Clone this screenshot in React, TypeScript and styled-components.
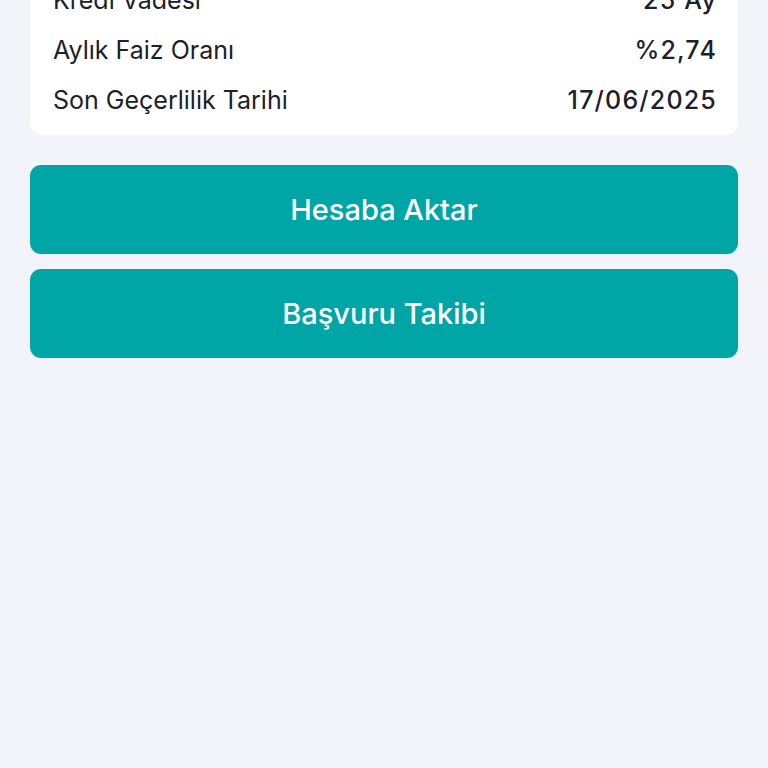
import React from 'react'
import styled, { createGlobalStyle } from 'styled-components'

const GlobalStyle = createGlobalStyle`
  html, body {
    margin: 0;
    padding: 0;
    background: #f2f4f9;
    font-family: Inter, "Noto Sans", "Liberation Sans", sans-serif;
    overflow: hidden;
  }
`

const Page = styled.div`
  display: flex;
  flex-direction: column;
  padding: 0 30px;
  margin-top: -35px;
`

const Card = styled.div`
  background: #ffffff;
  border-radius: 12px;
  padding: 10px 21px 10px 23px;
  display: flex;
  flex-direction: column;
`

const Row = styled.div`
  display: flex;
  justify-content: space-between;
  align-items: center;
  height: 50px;
  font-size: 25px;
  color: #202128;
`

const Label = styled.span`
  font-weight: 400;
`

const Value = styled.span`
  font-weight: 500;
  letter-spacing: 1.2px;
`

const Actions = styled.div`
  display: flex;
  flex-direction: column;
  gap: 15px;
  margin-top: 30px;
`

const ActionButton = styled.button`
  height: 89px;
  border: none;
  border-radius: 11px;
  background: #00a5a6;
  color: #ffffff;
  font-family: inherit;
  font-size: 29px;
  font-weight: 500;
  cursor: pointer;
`

const rows = [
  { label: 'Kredi Vadesi', value: '25 Ay' },
  { label: 'Aylık Faiz Oranı', value: '%2,74' },
  { label: 'Son Geçerlilik Tarihi', value: '17/06/2025' },
]

export default function App() {
  return (
    <>
      <GlobalStyle />
      <Page>
        <Card>
          {rows.map((r) => (
            <Row key={r.label}>
              <Label>{r.label}</Label>
              <Value>{r.value}</Value>
            </Row>
          ))}
        </Card>
        <Actions>
          <ActionButton>Hesaba Aktar</ActionButton>
          <ActionButton>Başvuru Takibi</ActionButton>
        </Actions>
      </Page>
    </>
  )
}
